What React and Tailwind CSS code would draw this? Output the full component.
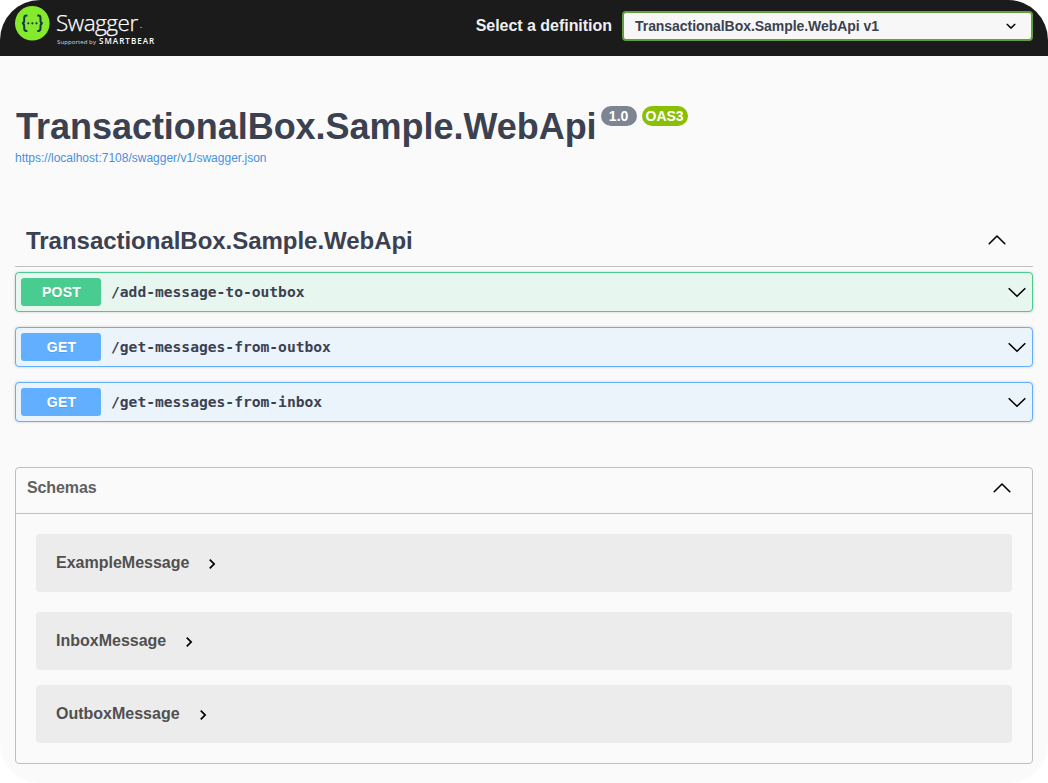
const operations = [
  { method: 'POST', path: '/add-message-to-outbox' },
  { method: 'GET', path: '/get-messages-from-outbox' },
  { method: 'GET', path: '/get-messages-from-inbox' },
];

const schemas = [
  { name: 'ExampleMessage', spacing: 'mt-5' },
  { name: 'InboxMessage', spacing: 'mt-5' },
  { name: 'OutboxMessage', spacing: 'mt-[15px]' },
];

function Chevron({ up = false }) {
  return (
    <svg width="20" height="20" viewBox="0 0 20 20" fill="none" stroke="#000" strokeWidth="1.6" strokeLinecap="round" strokeLinejoin="round">
      <path d={up ? 'M2.2 13.7 10 6l7.8 7.7' : 'M2.2 6.7 10 14.3l7.8-7.6'} />
    </svg>
  );
}

function Logo() {
  return (
    <div className="flex items-start pl-[15px] pt-1.5 text-white">
      <svg width="35" height="35" viewBox="0 0 35 35" className="shrink-0">
        <circle cx="17.3" cy="17.3" r="17.3" fill="#85ea2d" />
        <g fill="none" stroke="#173647" strokeWidth="2">
          <path d="M12.4 9.6h-.9c-1.7 0-2.3.9-2.3 2.4v2.4c0 1.8-.6 2.8-2.2 2.9 1.6.1 2.2 1.1 2.2 2.9v2.4c0 1.5.6 2.4 2.3 2.4h.9" />
          <path d="M22.3 9.6h.9c1.7 0 2.3.9 2.3 2.4v2.4c0 1.8.6 2.8 2.2 2.9-1.6.1-2.2 1.1-2.2 2.9v2.4c0 1.5-.6 2.4-2.3 2.4h-.9" />
        </g>
        <g fill="#173647">
          <circle cx="13.3" cy="17.3" r="1.1" />
          <circle cx="17.4" cy="17.3" r="1.1" />
          <circle cx="21.5" cy="17.3" r="1.1" />
        </g>
      </svg>
      <div className="ml-1.5 flex flex-col font-['Open_Sans',sans-serif]">
        <div className="flex h-[30px] items-start pt-[3px] leading-[27px]">
          <span className="text-[22.5px] font-light tracking-[-0.45px] [-webkit-text-stroke:0.25px_#fff]">Swagger</span>
          <span className="ml-0.5 mt-[9px] text-[3px] leading-[20px]">™</span>
        </div>
        <div className="flex h-3 items-center whitespace-nowrap pl-px leading-[10px]">
          <span className="w-[42px] text-[6px] tracking-[0.1px] text-[#dddddd]">Supported by</span>
          <span className="-mt-0.5 text-[8px] font-semibold tracking-[1.05px]">SMARTBEAR</span>
        </div>
      </div>
    </div>
  );
}

function Operation({ method, path }) {
  const post = method === 'POST';
  return (
    <div className={`flex h-10 items-center rounded border pl-[5px] pr-[5px] shadow-[0_0_3px_rgba(0,0,0,0.19)] ${post ? 'border-[#49cc90] bg-[#e8f6f0]' : 'border-[#61affe] bg-[#ebf3fb]'}`}>
      <span className={`h-7 w-20 rounded-[3px] pl-px text-center text-sm font-bold leading-7 tracking-[0.2px] text-white [text-shadow:0_1px_0_rgba(0,0,0,0.1)] ${post ? 'bg-[#49cc90]' : 'bg-[#61affe]'}`}>
        {method}
      </span>
      <span className="ml-2.5 flex-1 font-['DejaVu_Sans_Mono',monospace] text-[14.62px] font-bold leading-5">{path}</span>
      <Chevron />
    </div>
  );
}

function Schema({ name, spacing }) {
  return (
    <div className={`flex h-[58px] items-center rounded bg-[#ececec] pl-5 text-[#505050] ${spacing}`}>
      <span className="text-base font-bold leading-5">{name}</span>
      <svg width="20" height="20" viewBox="0 0 24 24" className="ml-[13px] mt-px">
        <path d="M10 6L8.59 7.41 13.17 12l-4.58 4.59L10 18l6-6z" fill="#000" />
      </svg>
    </div>
  );
}

export default function App() {
  return (
    <div className="h-[783px] w-[1048px] overflow-hidden rounded-[40px] bg-[#fafafa] font-['Liberation_Sans',Arial,sans-serif] text-[#3b4151]">
      <header className="flex h-14 justify-between bg-[#1b1b1b] pr-[15px]">
        <Logo />
        <div className="flex items-start pt-[11px]">
          <span className="mr-2.5 text-base font-bold leading-[29px] tracking-[-0.03px] text-[#f0f0f0]">Select a definition</span>
          <div className="flex h-[30px] w-[411px] items-center justify-between rounded border-2 border-[#62a03f] bg-[#f7f7f7] pl-[11px] pr-2.5">
            <span className="text-sm font-bold leading-5 tracking-[-0.05px]">TransactionalBox.Sample.WebApi v1</span>
            <svg width="20" height="20" viewBox="0 0 20 20">
              <path d="M13.418 7.859c.271-.268.709-.268.978 0 .27.268.272.701 0 .969l-3.908 3.83c-.27.268-.707.268-.979 0l-3.908-3.83c-.27-.267-.27-.701 0-.969.271-.268.709-.268.978 0L10 11z" />
            </svg>
          </div>
        </div>
      </header>

      <main className="px-[15px] pt-[50px]">
        <div className="flex h-11 items-start">
          <h1 className="pl-px pt-px text-[36px] font-bold leading-10 tracking-[-0.03px]">TransactionalBox.Sample.WebApi</h1>
          <span className="ml-1 h-5 w-9 rounded-full bg-[#7d8492] text-center text-sm font-bold leading-5 text-white">1.0</span>
          <span className="ml-[5px] h-5 w-[46px] rounded-full bg-[#89bf04] text-center text-sm font-bold leading-5 text-white">OAS3</span>
        </div>
        <a className="block h-4 text-xs leading-4 text-[#4990e2]">https://localhost:7108/swagger/v1/swagger.json</a>

        <section className="mt-[49px]">
          <div className="flex h-[52px] items-center justify-between border-b border-[#bebfc3] pl-[11px] pr-[26px]">
            <h2 className="text-2xl font-bold leading-8 tracking-[-0.03px]">TransactionalBox.Sample.WebApi</h2>
            <div className="pb-[2px]">
              <Chevron up />
            </div>
          </div>
          <div className="mt-[5px] flex flex-col gap-[15px]">
            {operations.map((op) => (
              <Operation key={op.path} {...op} />
            ))}
          </div>
        </section>

        <section className="mt-[45px] h-[297px] rounded border border-[#bfc0c4]">
          <div className="flex h-[46px] items-center justify-between border-b border-[#bfc0c4] pl-[11px] pr-5">
            <h3 className="pb-1.5 text-base font-bold leading-5 tracking-[-0.1px] text-[#606060]">Schemas</h3>
            <div className="pb-[5px]">
              <Chevron up />
            </div>
          </div>
          <div className="px-5">
            {schemas.map((schema) => (
              <Schema key={schema.name} {...schema} />
            ))}
          </div>
        </section>
      </main>
    </div>
  );
}
